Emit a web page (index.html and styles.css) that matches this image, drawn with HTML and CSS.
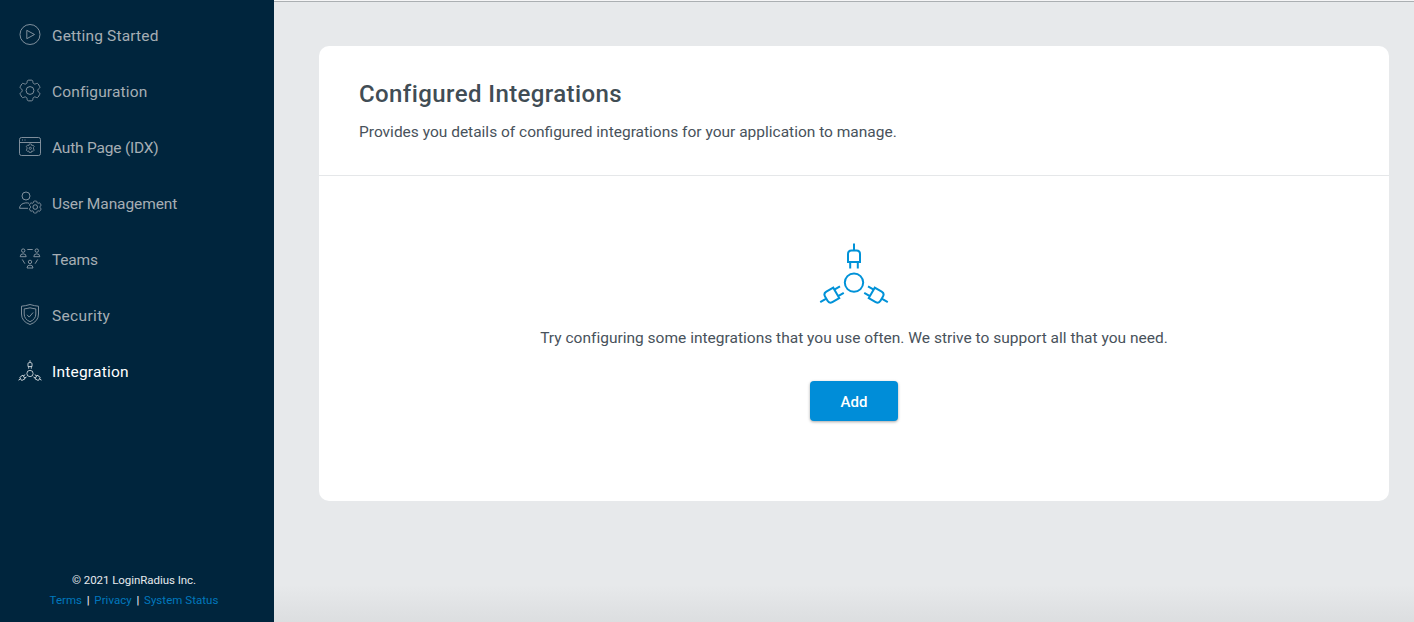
FILE: index.html
```html
<!DOCTYPE html>
<html lang="en">
<head>
<meta charset="utf-8">
<title>Configured Integrations</title>
<link rel="stylesheet" href="styles.css">
</head>
<body>
<svg class="defs" aria-hidden="true">
  <symbol id="gear" viewBox="2 2 20 20"><path vector-effect="non-scaling-stroke" d="M9.594 3.94c.09-.542.56-.94 1.11-.94h2.593c.55 0 1.02.398 1.11.94l.213 1.281c.063.374.313.686.645.87.074.04.147.083.22.127.325.196.72.257 1.075.124l1.217-.456a1.125 1.125 0 0 1 1.37.49l1.296 2.247a1.125 1.125 0 0 1-.26 1.431l-1.003.827c-.293.241-.438.613-.43.992a7.723 7.723 0 0 1 0 .255c-.008.378.137.75.43.991l1.004.827c.424.35.534.955.26 1.43l-1.298 2.247a1.125 1.125 0 0 1-1.369.491l-1.217-.456c-.355-.133-.75-.072-1.076.124a6.47 6.47 0 0 1-.22.128c-.331.183-.581.495-.644.869l-.213 1.281c-.09.543-.56.94-1.11.94h-2.594c-.55 0-1.019-.398-1.11-.94l-.213-1.281c-.062-.374-.312-.686-.644-.87a6.52 6.52 0 0 1-.22-.127c-.325-.196-.72-.257-1.076-.124l-1.217.456a1.125 1.125 0 0 1-1.369-.49l-1.297-2.247a1.125 1.125 0 0 1 .26-1.431l1.004-.827c.292-.24.437-.613.43-.991a6.932 6.932 0 0 1 0-.255c.007-.38-.138-.751-.43-.992l-1.004-.827a1.125 1.125 0 0 1-.26-1.43l1.297-2.247a1.125 1.125 0 0 1 1.37-.491l1.216.456c.356.133.751.072 1.076-.124.072-.044.146-.086.22-.128.332-.183.582-.495.644-.869l.214-1.28Z"/><circle vector-effect="non-scaling-stroke" cx="12" cy="12" r="3.4"/></symbol>
  <symbol id="gear-small" viewBox="0 0 12 12"><path d="M6 1 7.300 1.300 7.700 2.900 9.300 2.500 10.500 3.800 9.700 5.200V6.800L10.500 8.200 9.300 9.500 7.700 9.100 7.300 10.700H4.700L4.300 9.100 2.700 9.500 1.500 8.200 2.300 6.800V5.200L1.500 3.800 2.700 2.500 4.300 2.900 4.700 1.300Z"/><circle cx="6" cy="6" r="1.300"/></symbol>
  <g id="plug"><path d="M0-39V-32M-6-20.500V-28.500Q-6-32-2.500-32H2.500Q6-32 6-28.500V-20.500ZM-3.800-20V-14M3.800-20V-14"/></g>
  <g id="person"><circle cy="-2.600" r="1.700"/><path d="M-3 3.500Q-3 .600 0 .600T3 3.500Z"/></g>
</svg>
<div class="app">
  <aside class="sidebar">
    <nav class="nav">
      <a class="item started"><svg class="icon" viewBox="0 0 24 24"><circle cx="12" cy="11.500" r="10"/><path d="M8.800 7.300v8.400l7.700-4.200z"/></svg><span>Getting Started</span></a>
      <a class="item configuration"><svg class="icon" viewBox="0 0 24 24"><use href="#gear" x=".5" y="0" width="23" height="23"/></svg><span>Configuration</span></a>
      <a class="item auth"><svg class="icon" viewBox="0 0 24 24"><rect x="1.500" y="2.500" width="21" height="18" rx="2"/><path d="M1.500 7.500h21M4 5h1M6.500 5h1"/><use href="#gear-small" x="7" y="8" width="10.500" height="10.500"/></svg><span>Auth Page (IDX)</span></a>
      <a class="item users"><svg class="icon" viewBox="0 0 24 24"><circle cx="8" cy="5" r="4"/><path d="M11 12.300Q9.500 11.700 7.500 11.900 2 12.500 1.500 17.300H10"/><use href="#gear" x="10.500" y="9.300" width="13.500" height="13.500"/></svg><span>User Management</span></a>
      <a class="item teams"><svg class="icon" viewBox="0 0 24 24"><use href="#person" x="5.200" y="6.200"/><use href="#person" x="18.800" y="6.200"/><use href="#person" x="12" y="17.500"/><path d="M9.300 2.500h5.400M4.300 12.500l2.600 4.200M19.700 12.500l-2.600 4.200"/></svg><span>Teams</span></a>
      <a class="item security"><svg class="icon" viewBox="0 0 24 24"><path d="M12 1.500Q7 3 3.500 3.200V11Q3.500 18.500 12 21.500 20.500 18.500 20.500 11V3.200Q17 3 12 1.500Z"/><path d="M12 4.800Q9 5.600 6.200 5.900V11Q6.200 16.200 12 18.700 17.800 16.200 17.800 11V5.900Q15 5.600 12 4.800ZM9 11.800l2.200 2.300 3.900-4.600"/></svg><span>Security</span></a>
      <a class="item integration active"><svg class="icon" viewBox="0 0 24 24"><g class="hub" transform="translate(12 14.500) scale(.34)"><circle r="9.200"/><use href="#plug"/><use href="#plug" transform="rotate(120)"/><use href="#plug" transform="rotate(240)"/></g></svg><span>Integration</span></a>
    </nav>
    <footer class="footer">
      <div>© 2021 LoginRadius Inc.</div>
      <div class="links"><a>Terms</a><i>|</i><a>Privacy</a><i>|</i><a>System Status</a></div>
    </footer>
  </aside>
  <main class="main">
    <section class="card">
      <header class="head">
        <h1>Configured Integrations</h1>
        <p>Provides you details of configured integrations for your application to manage.</p>
      </header>
      <div class="body">
        <svg class="art" viewBox="-36 -39.6 72 62"><circle r="9.200"/><use href="#plug"/><use href="#plug" transform="rotate(120)"/><use href="#plug" transform="rotate(240)"/></svg>
        <p>Try configuring some integrations that you use often. We strive to support all that you need.</p>
        <button class="add">Add</button>
      </div>
    </section>
  </main>
</div>
</body>
</html>
```
FILE: styles.css
```css
* { box-sizing: border-box; }
body { margin: 0; font-family: Roboto, "Liberation Sans", sans-serif; font-size: 15.5px; color: #48525b; }
.defs { position: absolute; width: 0; height: 0; }
svg { fill: none; stroke: currentColor; }
.app { display: flex; height: 622px; overflow: hidden; }
.sidebar { width: 274px; flex: none; background: #00253d; display: flex; flex-direction: column; justify-content: space-between; padding: 7px 0 12px; }
.nav { display: flex; flex-direction: column; }
.item { display: flex; align-items: center; gap: 10px; height: 56px; padding-left: 18px; color: #a6aeb4; }
.item span { padding-top: 2px; }
.icon { width: 24px; height: 24px; stroke-width: .9; color: #8d9ba6; overflow: visible; }
.started { letter-spacing: .16px; }
.configuration { letter-spacing: .14px; }
.auth { letter-spacing: -.2px; }
.users { letter-spacing: -.1px; }
.teams { letter-spacing: -.2px; }
.security { letter-spacing: .35px; }
.integration { letter-spacing: .22px; }
.active, .active .icon { color: #fff; }
.hub { stroke-width: 2.1; }
.footer { width: 268px; text-align: center; font-size: 11.5px; letter-spacing: -.05px; line-height: 20px; color: #e6eaed; }
.links { display: flex; justify-content: center; gap: 4.7px; letter-spacing: .04px; color: #0078bd; }
.links i { font-style: normal; color: #fff; }
.main { flex: 1; border-top: 1px solid #f5f5f6; padding: 45px 25px 0 45px; background: linear-gradient(#abafb2, #abafb2) top / 100% 1px no-repeat, linear-gradient(#e7e9eb 94%, #dcdee0); }
.card { height: 455px; background: #fff; border-radius: 10px; }
.head { height: 130px; border-bottom: 1px solid #e5e7e9; padding: 32px 40px 0; }
h1 { margin: 0; font-size: 24px; line-height: 32px; font-weight: 500; letter-spacing: .4px; color: #414d55; }
p { margin: 0; line-height: 24px; }
.head p { margin-top: 10px; }
.body { display: flex; flex-direction: column; align-items: center; padding-top: 67px; }
.art { width: 72px; height: 62px; stroke-width: 2; color: #0092d8; }
.body p { margin-top: 21px; letter-spacing: .01px; }
.add { width: 88px; height: 40px; margin-top: 31px; padding: 2px 0 0; border: 0; border-radius: 4px; background: #008dd8; color: #fff; font: 500 15px Roboto, sans-serif; box-shadow: 0 1px 3px rgba(0,0,0,.35); }
```
